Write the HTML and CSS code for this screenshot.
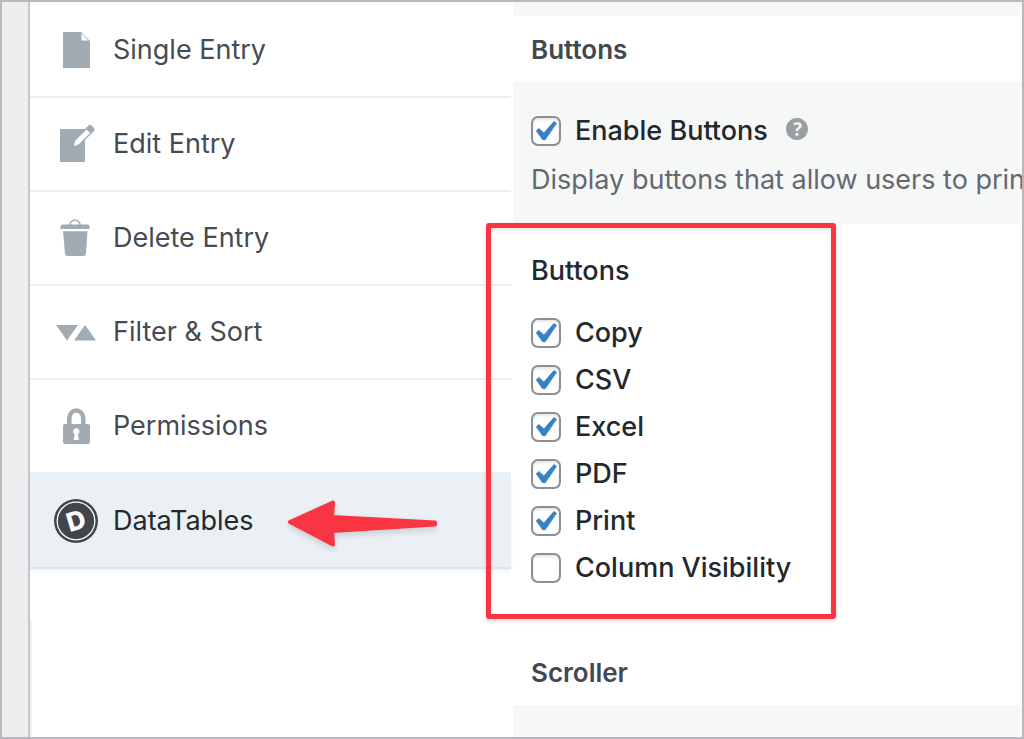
FILE: index.html
```html
<!DOCTYPE html>
<html lang="en">
<head>
<meta charset="utf-8">
<meta name="viewport" content="width=device-width, initial-scale=1">
<title>View Settings</title>
<link rel="stylesheet" href="styles.css">
</head>
<body>
<div class="frame">
  <div class="gutter"></div>
  <nav class="tabs" aria-label="Settings sections">
    <ul class="tab-list">
      <li><a class="tab" href="#single">
        <svg class="tab-icon" viewBox="0 0 44 44" aria-hidden="true"><path fill="#a2aab2" d="M9 4h18l9 9v27H9z"/><path fill="#fff" d="M27.500 5.500V12.500h7z"/></svg>
        Single Entry</a></li>
      <li><a class="tab" href="#edit">
        <svg class="tab-icon" viewBox="0 0 44 44" aria-hidden="true"><path fill="#a2aab2" d="M6 7h25v33H6z"/><path fill="#a2aab2" d="M31 7l3.500-3.500q1.500-1.300 3 0l2.500 2.500q1.300 1.500 0 3L31 18z"/><path fill="#fff" d="M21 19L32.500 7.500l3.500 3.500L24.500 22.500 20 24z"/></svg>
        Edit Entry</a></li>
      <li><a class="tab" href="#delete">
        <svg class="tab-icon" viewBox="0 0 44 44" aria-hidden="true"><path fill="none" stroke="#a2aab2" stroke-width="1.600" d="M16 9a5 5 0 0 1 10 0"/><path fill="#a2aab2" d="M8.500 8.500h25q2 0 2 2V13h-29v-2.500q0-2 2-2zM9 15.200h24.500L32 37.500q-.2 2.500-2.500 2.500h-16q-2.300 0-2.500-2.500z"/></svg>
        Delete Entry</a></li>
      <li><a class="tab" href="#filter">
        <svg class="tab-icon" viewBox="0 0 44 44" aria-hidden="true"><path fill="#a2aab2" d="M2 15h22L13 30.500zM20 30.500h22L31 15z"/></svg>
        Filter &amp; Sort</a></li>
      <li><a class="tab" href="#permissions">
        <svg class="tab-icon" viewBox="0 0 44 44" aria-hidden="true"><path fill="none" stroke="#a2aab2" stroke-width="4.500" d="M15.300 21v-7a7 7.500 0 0 1 14 0v7"/><rect x="9" y="20" width="27" height="20" rx="2" fill="#a2aab2"/><path fill="#fff" d="M22.300 24a3.300 3.300 0 0 1 1.600 6.100l1.100 5.900h-5.400l1.100-5.900a3.300 3.300 0 0 1 1.600-6.100z"/></svg>
        Permissions</a></li>
      <li class="current"><a class="tab tab-active" href="#datatables" aria-current="page">
        <svg class="tab-icon" viewBox="0 0 44 44" aria-hidden="true"><circle cx="22" cy="22" r="22" fill="#41464c"/><circle cx="22" cy="22" r="18.800" fill="none" stroke="#fff" stroke-width="1.300"/><text class="logo-letter" x="22" y="31" text-anchor="middle" transform="rotate(-17 22 22)">D</text></svg>
        DataTables</a>
        <svg class="arrow" viewBox="0 0 160 60" aria-hidden="true"><path d="M9 29L52 9.500 51 24 154 29.500v2L51 38l1 13.500z"/></svg>
      </li>
    </ul>
    <div class="tabs-rest"></div>
  </nav>
  <main class="panel">
    <div class="band"></div>
    <h2 class="section-title">Buttons</h2>
    <div class="setting">
      <div class="setting-row">
        <label class="option"><input class="check" type="checkbox" checked>Enable Buttons</label>
        <a class="help" href="#help" aria-label="Help"><svg viewBox="3 3 14 14" aria-hidden="true"><path d="M17 10c0-3.870-3.140-7-7-7-3.870 0-7 3.130-7 7s3.130 7 7 7c3.860 0 7-3.130 7-7zm-6.300 1.480H9.140v-.43c0-.38.08-.7.24-.98s.46-.57.88-.89c.41-.29.68-.53.81-.71.14-.18.2-.39.2-.62 0-.25-.09-.44-.28-.58-.19-.13-.45-.19-.79-.19-.58 0-1.250.19-2 .57l-.64-1.280c.87-.49 1.800-.74 2.770-.74.81 0 1.450.2 1.920.58.48.39.71.91.71 1.550 0 .43-.09.8-.29 1.110-.19.32-.57.67-1.110 1.060-.38.28-.61.49-.71.63-.1.15-.15.34-.15.57v.35zm-1.470 2.740c-.18-.17-.27-.42-.27-.73 0-.33.08-.58.26-.75s.43-.25.77-.25c.32 0 .57.09.75.26s.27.42.27.74c0 .3-.09.55-.27.72-.18.18-.43.27-.75.27-.33 0-.58-.09-.77-.26z"/></svg></a>
      </div>
      <p class="description">Display buttons that allow users to prin</p>
    </div>
    <fieldset class="choices">
      <legend class="choices-title">Buttons</legend>
      <label class="option"><input class="check" type="checkbox" checked>Copy</label>
      <label class="option"><input class="check" type="checkbox" checked>CSV</label>
      <label class="option"><input class="check" type="checkbox" checked>Excel</label>
      <label class="option"><input class="check" type="checkbox" checked>PDF</label>
      <label class="option"><input class="check" type="checkbox" checked>Print</label>
      <label class="option"><input class="check" type="checkbox">Column Visibility</label>
      <div class="highlight"></div>
    </fieldset>
    <h2 class="section-title">Scroller</h2>
    <div class="band band-rest"></div>
  </main>
</div>
</body>
</html>
```
FILE: styles.css
```css
* {
  box-sizing: border-box;
}

body {
  margin: 0;
  font-family: Inter, "Liberation Sans", sans-serif;
  font-size: 27px;
  line-height: 30px;
  color: #23282d;
  background: #fff;
}

.frame {
  display: flex;
  height: 100vh;
  border: 2px solid #b9b9bd;
  overflow: hidden;
}

.gutter {
  flex: 0 0 28px;
  background: #eeeef0;
  border-right: 2px solid #c6c7ca;
}

.tabs {
  display: flex;
  flex-direction: column;
  flex: 0 0 481px;
}

.tab-list {
  margin: 0;
  padding: 2px 0 0;
  list-style: none;
}

.tab {
  display: flex;
  align-items: center;
  gap: 15px;
  height: 94px;
  padding-left: 24px;
  border-bottom: 2px solid #ebf0f5;
  color: #464b53;
  text-decoration: none;
}

.tab-icon {
  flex: none;
  width: 44px;
  height: 44px;
}

.current {
  position: relative;
}

.tab-active {
  height: 95px;
  background: #ebf0f5;
  border-bottom-color: #dfe5eb;
  box-shadow: 0 2px 3px #0000000d;
  color: #23282d;
}

.logo-letter {
  font-size: 26px;
  font-weight: 800;
  fill: #fff;
}

.arrow {
  position: absolute;
  left: 251px;
  top: 19px;
  width: 160px;
  height: 60px;
  fill: #fa3543;
  stroke: #fa3543;
  stroke-width: 4px;
  stroke-linejoin: round;
  filter: drop-shadow(0 3px 3px #00000026);
}

.tabs-rest {
  flex: 1;
  margin-top: 51px;
  border-left: 2px solid #f1f1f2;
}

.panel {
  display: flex;
  flex-direction: column;
  flex: 1;
  min-width: 0;
  margin-left: 2px;
}

.band {
  flex: 0 0 14px;
  background: #f6f7f7;
}

.band-rest {
  flex: 1;
}

.section-title {
  margin: 0;
  padding: 19px 18px 17px;
  font-size: 26px;
  font-weight: 600;
  line-height: 30px;
  color: #414850;
}

.setting {
  padding: 34px 0 29px 18px;
  background: #f6f7f7;
  overflow: hidden;
}

.setting-row {
  display: flex;
  align-items: flex-start;
  gap: 18px;
}

.option {
  display: flex;
  align-items: center;
  gap: 14px;
  font-weight: 500;
}

.check {
  appearance: none;
  flex: none;
  width: 30px;
  height: 30px;
  margin: 0;
  border: 2px solid #8c8f94;
  border-radius: 7px;
  background-color: #fff;
  box-shadow: inset 0 2px 3px #0000001a;
}

.check:checked {
  background-image: url("data:image/svg+xml,%3Csvg xmlns='http://www.w3.org/2000/svg' viewBox='0 0 20 20'%3E%3Cpath d='M14.830 4.890l1.340.94-5.810 8.380H9.020L5.780 9.670l1.340-1.250 2.570 2.400z' fill='%233582c4' stroke='%233582c4' stroke-width='.4' stroke-linejoin='round'/%3E%3C/svg%3E");
  background-repeat: no-repeat;
  background-size: 39px 39px;
  background-position: -8px -6px;
}

.help {
  display: flex;
  padding-top: 2px;
}

.help svg {
  width: 22px;
  height: 22px;
  fill: #9b9ea2;
}

.description {
  margin: 19px 0 0;
  color: #646970;
  white-space: nowrap;
}

.choices {
  position: relative;
  display: flex;
  flex-direction: column;
  gap: 17px;
  min-width: 0;
  margin: 0;
  padding: 32px 0 56px 18px;
  border: 0;
}

.choices-title {
  float: left;
  margin-bottom: 15px;
  padding: 0;
  font-weight: 500;
}

.highlight {
  position: absolute;
  top: -1px;
  left: -27px;
  width: 350px;
  height: 396px;
  border: 5px solid #fa3543;
  border-radius: 3px;
  box-shadow: 0 2px 4px #00000026, inset 0 2px 4px #0000001a;
  pointer-events: none;
}
```
